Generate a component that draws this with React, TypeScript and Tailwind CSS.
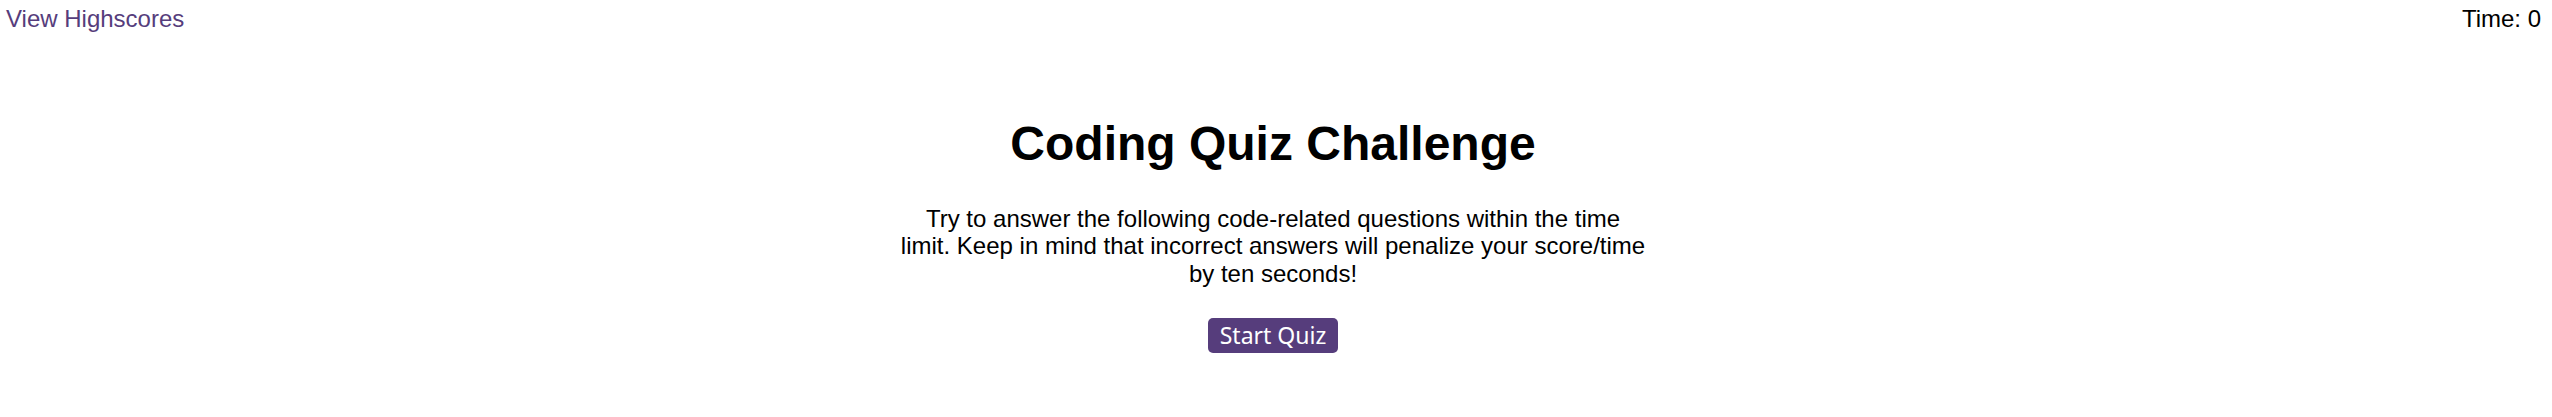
export default function App() {
  return (
    <div className="min-h-screen bg-white text-black" style={{ fontFamily: '"Liberation Sans", Arial, sans-serif' }}>
      {/* Top bar */}
      <header className="flex items-start justify-between pl-[6px] pr-[11px] pt-[5px] text-[24px] leading-[27.6px]">
        <a href="#" className="text-[#563d7c]">View Highscores</a>
        <span>Time: 0</span>
      </header>

      {/* Start screen */}
      <main className="flex flex-col items-center pr-[6px] text-center">
        <h1 className="mt-[83px] text-[48px] leading-[55px] font-bold">Coding Quiz Challenge</h1>
        <p className="mt-[34px] w-[745px] text-[24px] leading-[27.6px]">
          Try to answer the following code-related questions within the time limit. Keep in mind that incorrect
          answers will penalize your score/time by ten seconds!
        </p>
        <button
          className="mt-[31px] rounded-[5px] bg-[#563d7c] px-[12px] py-[2px] text-[23px] leading-[31px] text-white"
          style={{ fontFamily: '"Noto Sans", "Open Sans", sans-serif' }}
        >
          Start Quiz
        </button>
      </main>
    </div>
  );
}
